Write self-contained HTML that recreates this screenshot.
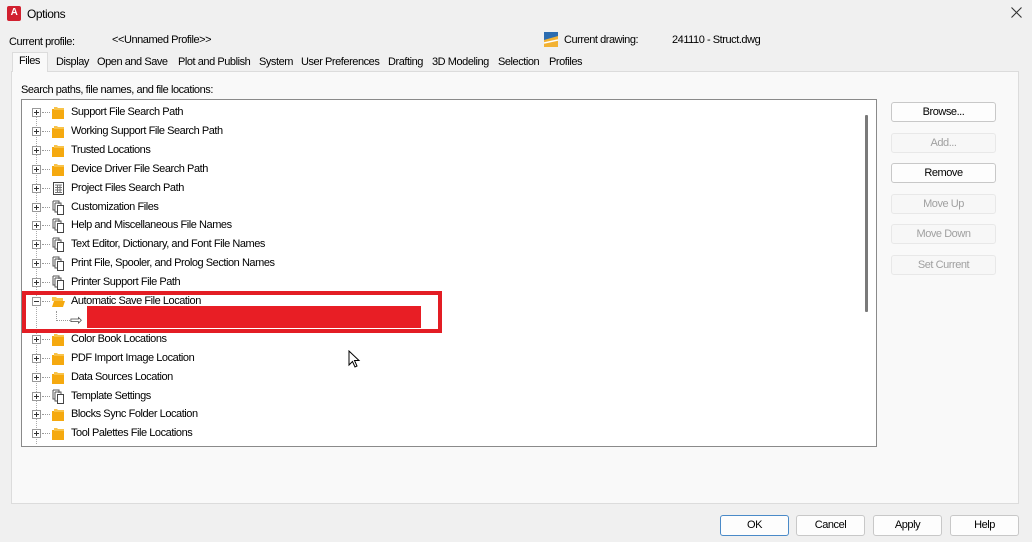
<!DOCTYPE html>
<html><head><meta charset="utf-8"><style>
*{box-sizing:border-box;margin:0;padding:0}
body{width:1032px;height:542px;background:#f0f0f0;font-family:"Liberation Sans",Arial,sans-serif;font-size:11px;letter-spacing:-0.45px;color:#000;position:relative;overflow:hidden}
.a{position:absolute;white-space:nowrap}
.panel{position:absolute;left:11px;top:71px;width:1008px;height:433px;background:#f9f9f9;border:1px solid #dcdcdc}
.tree{position:absolute;left:21px;top:99px;width:856px;height:348px;background:#fff;border:1px solid #8a8a8a}
.btn{position:absolute;width:105px;height:20px;border:1px solid #c8c8c8;border-radius:3px;background:#fdfdfd;text-align:center;line-height:18px;font-size:11px}
.dis{color:#a0a0a0;border-color:#e8e8e8;background:#f7f7f7}
.bb{position:absolute;top:515px;width:69px;height:21px;border:1px solid #c8c8c8;border-radius:3px;background:#fdfdfd;text-align:center;line-height:19px}
.row{position:absolute;left:0;height:19px;line-height:19px}
.pm{position:absolute;left:10px;top:5px;width:9px;height:9px;border:1px solid #999;background:#fff}
.pm:before{content:"";position:absolute;left:1px;top:3px;width:5px;height:1px;background:#333}
.pm.p:after{content:"";position:absolute;left:3px;top:1px;width:1px;height:5px;background:#333}
.dash{position:absolute;left:20px;top:9px;width:8px;border-top:1px dotted #999}
.ic{position:absolute;left:28px;top:2px;width:16px;height:15px}
.t{position:absolute;left:49px;top:0}
.tabs span{position:absolute;top:56px}
</style></head><body>
<div class="a" style="left:7px;top:6px;width:14px;height:15px;background:#d1202f;border-radius:2px;color:#fff;font-size:10px;font-weight:bold;text-align:center;line-height:13px">A</div>
<div class="a" style="left:27px;top:7px;font-size:12px">Options</div>
<svg class="a" style="left:1011px;top:7px" width="11" height="11"><path d="M0.5 0.5L10.5 10.5M10.5 0.5L0.5 10.5" stroke="#333" stroke-width="1.1"/></svg>
<div class="a" style="left:9px;top:36px">Current profile:</div>
<div class="a" style="left:112px;top:34px">&lt;&lt;Unnamed Profile&gt;&gt;</div>
<svg class="a" style="left:544px;top:32px" width="14" height="15"><rect x="0" y="0" width="14" height="15" fill="#2b6cb0"/><path d="M0 8 L14 4 L14 15 L0 15Z" fill="#f2b233"/><path d="M0 11 L14 8" stroke="#fff" stroke-width="1.5"/></svg>
<div class="a" style="left:564px;top:34px">Current drawing:</div>
<div class="a" style="left:672px;top:34px">241110 - Struct.dwg</div>
<div class="panel"></div>
<div class="a" style="left:12px;top:52px;width:36px;height:20px;background:#f9f9f9;border:1px solid #dcdcdc;border-bottom:none"></div>
<div class="tabs">
<span style="left:19px;top:55px">Files</span><span style="left:56px">Display</span><span style="left:97px">Open and Save</span><span style="left:178px">Plot and Publish</span><span style="left:259px">System</span><span style="left:301px">User Preferences</span><span style="left:388px">Drafting</span><span style="left:432px">3D Modeling</span><span style="left:498px">Selection</span><span style="left:549px">Profiles</span>
</div>
<div class="a" style="left:21px;top:84px">Search paths, file names, and file locations:</div>
<div class="tree">
<div class="a" style="left:14px;top:14px;height:330px;border-left:1px dotted #aaa"></div>
<div class="a" style="left:843px;top:15px;width:3px;height:197px;background:#7a7a7a;border-radius:1px"></div>
<div id="rows"></div>
</div>
<div class="a" style="left:87px;top:306px;width:334px;height:22px;background:#e81e25"></div>
<div class="a" style="left:22px;top:291px;width:420px;height:42px;border:4px solid #e31d24"></div>
<svg class="a" style="left:348px;top:350px" width="14" height="20"><path d="M1 1 L1 15 L4.5 11.5 L7 17 L9 16 L6.5 10.5 L11 10.5Z" fill="#fff" stroke="#000" stroke-width="1"/></svg>
<div class="btn" style="left:891px;top:102px">Browse...</div>
<div class="btn dis" style="left:891px;top:133px">Add...</div>
<div class="btn" style="left:891px;top:163px">Remove</div>
<div class="btn dis" style="left:891px;top:194px">Move Up</div>
<div class="btn dis" style="left:891px;top:224px">Move Down</div>
<div class="btn dis" style="left:891px;top:255px">Set Current</div>
<div class="bb" style="left:720px;border:1px solid #4a8ac8">OK</div>
<div class="bb" style="left:796px">Cancel</div>
<div class="bb" style="left:873px">Apply</div>
<div class="bb" style="left:950px">Help</div>
<script>
var F='<svg class="ic" viewBox="0 0 16 15"><path d="M2 4h4l1 1h7v9H2z" fill="#f5a90f"/><path d="M4 2h3l1 1h6v2H4z" fill="#f8c34a"/></svg>';
var O='<svg class="ic" viewBox="0 0 16 15"><path d="M2 3h4l1 1h6v3H2z" fill="#f8c34a"/><path d="M2 13l2-6h11l-2 6z" fill="#f5a90f"/></svg>';
var D='<svg class="ic" viewBox="0 0 16 15"><path d="M3 1h6v3M5 3h6v3" fill="none" stroke="#555"/><rect x="7.5" y="5.5" width="6" height="9" fill="#fff" stroke="#444"/><path d="M3 1v9h2M5 3v9h2" fill="none" stroke="#555"/></svg>';
var G='<svg class="ic" viewBox="0 0 16 15"><rect x="3.5" y="1.5" width="10" height="12" fill="#fff" stroke="#444"/><path d="M5 4h7M5 6.5h7M5 9h7M5 11.5h7M7.5 4v8M10 4v8" stroke="#777"/></svg>';
var items=[["Support File Search Path",F],["Working Support File Search Path",F],["Trusted Locations",F],["Device Driver File Search Path",F],["Project Files Search Path",G],["Customization Files",D],["Help and Miscellaneous File Names",D],["Text Editor, Dictionary, and Font File Names",D],["Print File, Spooler, and Prolog Section Names",D],["Printer Support File Path",D],["Automatic Save File Location",O,1],null,["Color Book Locations",F],["PDF Import Image Location",F],["Data Sources Location",F],["Template Settings",D],["Blocks Sync Folder Location",F],["Tool Palettes File Locations",F]];
var h='';
for(var i=0;i<items.length;i++){var y=3+i*18.9;var it=items[i];
if(!it){h+='<div class="row" style="top:'+y+'px;width:100px"><div class="a" style="left:34px;top:0;height:10px;border-left:1px dotted #999"></div><div class="a" style="left:34px;top:9px;width:14px;border-top:1px dotted #999"></div><div class="a" style="left:48px;top:0;font-size:15px;color:#444">⇨</div></div>';continue;}
h+='<div class="row" style="top:'+y+'px;width:400px"><div class="pm '+(it[2]?'':'p')+'"></div><div class="dash"></div>'+it[1]+'<div class="t">'+it[0]+'</div></div>';}
document.getElementById('rows').innerHTML=h;
</script>
</body></html>
